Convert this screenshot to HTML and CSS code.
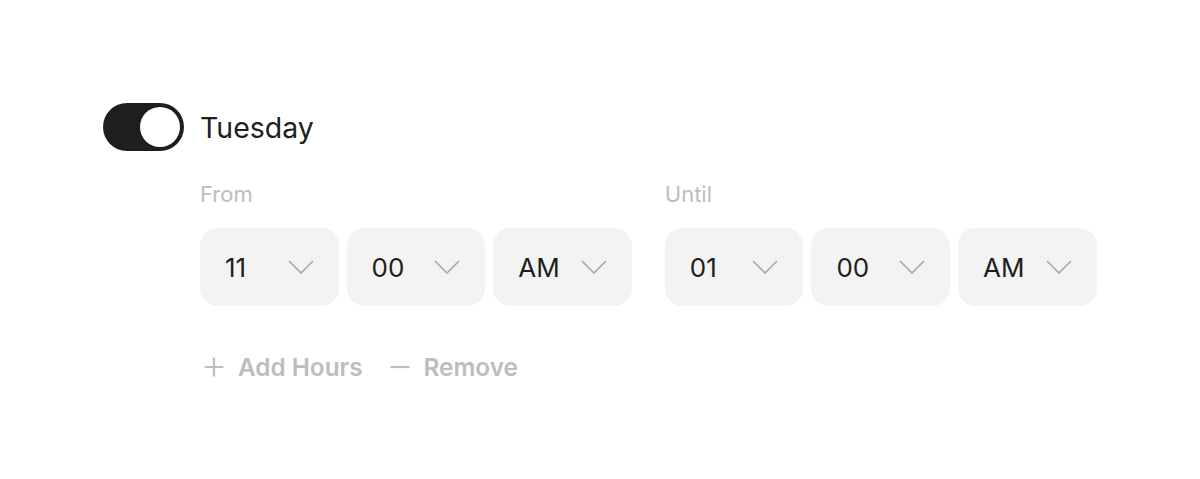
FILE: index.html
```html
<!DOCTYPE html>
<html lang="en">
<head>
  <meta charset="UTF-8" />
  <meta name="viewport" content="width=device-width, initial-scale=1.0"/>
  <title>Working Hours</title>
  <link rel="stylesheet" href="styles.css">
</head>
<body>

  <div class="day">
    <div class="day-head">
      <button class="toggle on" aria-label="Toggle Tuesday"><span class="knob"></span></button>
      <h2>Tuesday</h2>
    </div>

    <div class="hours">
      <div class="ranges">
        <div class="range">
          <label>From</label>
          <div class="selects">
            <div class="select"><span>11</span><svg viewBox="0 0 26 14"><path d="M1 1l12 12L25 1"/></svg></div>
            <div class="select"><span>00</span><svg viewBox="0 0 26 14"><path d="M1 1l12 12L25 1"/></svg></div>
            <div class="select"><span>AM</span><svg viewBox="0 0 26 14"><path d="M1 1l12 12L25 1"/></svg></div>
          </div>
        </div>
        <div class="range">
          <label>Until</label>
          <div class="selects">
            <div class="select"><span>01</span><svg viewBox="0 0 26 14"><path d="M1 1l12 12L25 1"/></svg></div>
            <div class="select"><span>00</span><svg viewBox="0 0 26 14"><path d="M1 1l12 12L25 1"/></svg></div>
            <div class="select"><span>AM</span><svg viewBox="0 0 26 14"><path d="M1 1l12 12L25 1"/></svg></div>
          </div>
        </div>
      </div>

      <div class="actions">
        <button class="action"><svg viewBox="0 0 20 20"><path d="M10 0.5v19M0.5 10h19"/></svg>Add Hours</button>
        <button class="action"><svg viewBox="0 0 20 20"><path d="M0.5 10h19"/></svg>Remove</button>
      </div>
    </div>
  </div>

</body>
</html>
```

FILE: styles.css
```css
:root {
  --escuro: #1e1e1e;
  --cinza-texto: #bdbdbd;
  --cinza-campo: #f3f3f3;
  --cinza-seta: #ababab;
}

* { box-sizing: border-box; margin: 0; padding: 0; }

body {
  font-family: 'Inter', 'Noto Sans', sans-serif;
  background: #fff;
  color: var(--escuro);
}

.day {
  padding: 103px 0 0 103px;
}

.day-head {
  display: flex;
  align-items: center;
  gap: 16px;
}

.toggle {
  width: 81px;
  height: 48px;
  border: none;
  border-radius: 24px;
  background: var(--escuro);
  padding: 4px;
  display: flex;
  justify-content: flex-end;
  cursor: pointer;
}

.knob {
  width: 40px;
  height: 40px;
  border-radius: 50%;
  background: #fff;
}

.day-head h2 {
  font-size: 28.5px;
  font-weight: 400;
}

.hours {
  padding-left: 97px;
}

.ranges {
  display: flex;
  gap: 33px;
  margin-top: 28px;
}

.range label {
  display: block;
  font-size: 22px;
  color: var(--cinza-texto);
  line-height: 30px;
  margin-bottom: 19px;
}

.selects {
  display: flex;
  gap: 8px;
}

.select {
  width: 138.6px;
  height: 78px;
  background: var(--cinza-campo);
  border-radius: 18px;
  padding: 0 25px 0 25px;
  display: flex;
  align-items: center;
  justify-content: space-between;
  font-size: 26px;
}

.select svg {
  width: 26px;
  height: 14px;
  fill: none;
  stroke: var(--cinza-seta);
  stroke-width: 1.7;
}

.actions {
  display: flex;
  gap: 23px;
  margin-top: 46px;
}

.action {
  display: flex;
  align-items: center;
  gap: 14px;
  padding-left: 4px;
  background: none;
  border: none;
  font-family: inherit;
  font-size: 24.3px;
  font-weight: 600;
  color: var(--cinza-texto);
  cursor: pointer;
}

.action svg {
  width: 20px;
  height: 20px;
  fill: none;
  stroke: var(--cinza-texto);
  stroke-width: 2.2;
}
```
